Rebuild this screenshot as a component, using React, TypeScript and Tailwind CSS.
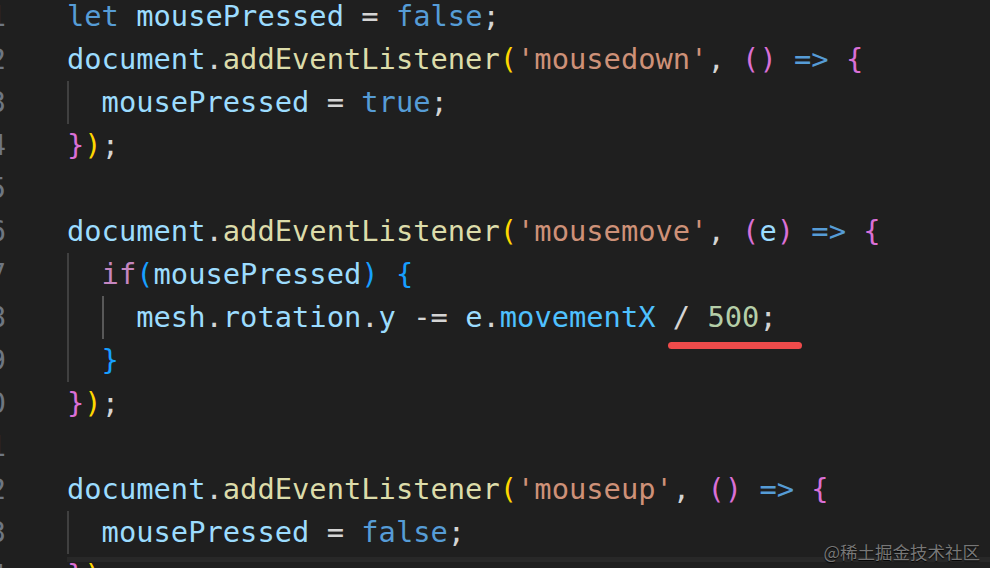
import React from "react";

type Tok = [string, string];

const KW = "text-[#569cd6]";
const VAR = "text-[#9cdcfe]";
const FN = "text-[#dcdcaa]";
const STR = "text-[#ce9178]";
const P = "text-[#d4d4d4]";
const GOLD = "text-[#ffd700]";
const ORC = "text-[#da70d6]";
const BLU = "text-[#179fff]";
const CTL = "text-[#c586c0]";
const PROP = "text-[#4fc1ff]";
const NUM = "text-[#b5cea8]";

type Line = { no: number; guides: string[]; toks: Tok[] };

const listener = (ev: string, args: Tok[]): Tok[] => [
  ["document", VAR],
  [".", P],
  ["addEventListener", FN],
  ["(", GOLD],
  [`'${ev}'`, STR],
  [", ", P],
  ...args,
  [" ", P],
  ["=>", KW],
  [" ", P],
  ["{", ORC],
];

const lines: Line[] = [
  { no: 11, guides: [], toks: [["let", KW], [" ", P], ["mousePressed", VAR], [" = ", P], ["false", KW], [";", P]] },
  { no: 12, guides: [], toks: listener("mousedown", [["()", ORC]]) },
  { no: 13, guides: ["border-[#404040]"], toks: [["mousePressed", VAR], [" = ", P], ["true", KW], [";", P]] },
  { no: 14, guides: [], toks: [["}", ORC], [")", GOLD], [";", P]] },
  { no: 15, guides: [], toks: [] },
  { no: 16, guides: [], toks: listener("mousemove", [["(", ORC], ["e", VAR], [")", ORC]]) },
  { no: 17, guides: ["border-[#404040]"], toks: [["if", CTL], ["(", BLU], ["mousePressed", VAR], [")", BLU], [" ", P], ["{", BLU]] },
  {
    no: 18,
    guides: ["border-[#404040]", "border-[#585858]"],
    toks: [
      ["mesh", VAR],
      [".", P],
      ["rotation", VAR],
      [".", P],
      ["y", VAR],
      [" -= ", P],
      ["e", VAR],
      [".", P],
      ["movementX", PROP],
      [" / ", P],
      ["500", NUM],
      [";", P],
    ],
  },
  { no: 19, guides: ["border-[#404040]"], toks: [["}", BLU]] },
  { no: 20, guides: [], toks: [["}", ORC], [")", GOLD], [";", P]] },
  { no: 21, guides: [], toks: [] },
  { no: 22, guides: [], toks: listener("mouseup", [["()", ORC]]) },
  { no: 23, guides: ["border-[#404040]"], toks: [["mousePressed", VAR], [" = ", P], ["false", KW], [";", P]] },
  { no: 24, guides: [], toks: [["}", ORC], [")", GOLD], [";", P]] },
];

export default function App() {
  return (
    <div
      className="relative w-[990px] h-[568px] overflow-hidden bg-[#1f1f1f]"
      style={{ fontFamily: "'DejaVu Sans Mono', 'Liberation Mono', monospace" }}
    >
      <div className="flex flex-col mt-[-5px] text-[28.75px] leading-[43px] whitespace-pre">
        {lines.map((l) => (
          <div key={l.no} className="flex h-[43px]">
            <div className="w-[40px] ml-[-34px] shrink-0 text-right text-[#6e7681]">{l.no}</div>
            <div className="relative ml-[61px] flex flex-1">
              {l.no === 24 && <div className="absolute left-0 right-0 top-[3px] h-[5px] bg-[#282828]" />}
              {l.guides.map((g, i) => (
                <div key={i} className={`w-[2ch] shrink-0 border-l-2 ${g}`} />
              ))}
              <div className="relative">
                {l.toks.map(([t, c], i) => (
                  <span key={i} className={c}>
                    {t}
                  </span>
                ))}
              </div>
            </div>
          </div>
        ))}
      </div>
      <div className="absolute left-[668px] top-[342px] w-[134px] h-[7px] rounded-full bg-[#ef4b4b]" />
      <div
        className="absolute right-[10px] bottom-[8px] text-[17.5px] leading-none text-[#777777] [text-shadow:0_1px_1px_#000]"
        style={{ fontFamily: "'Noto Sans CJK SC', 'Noto Sans', sans-serif" }}
      >
        @稀土掘金技术社区
      </div>
    </div>
  );
}
